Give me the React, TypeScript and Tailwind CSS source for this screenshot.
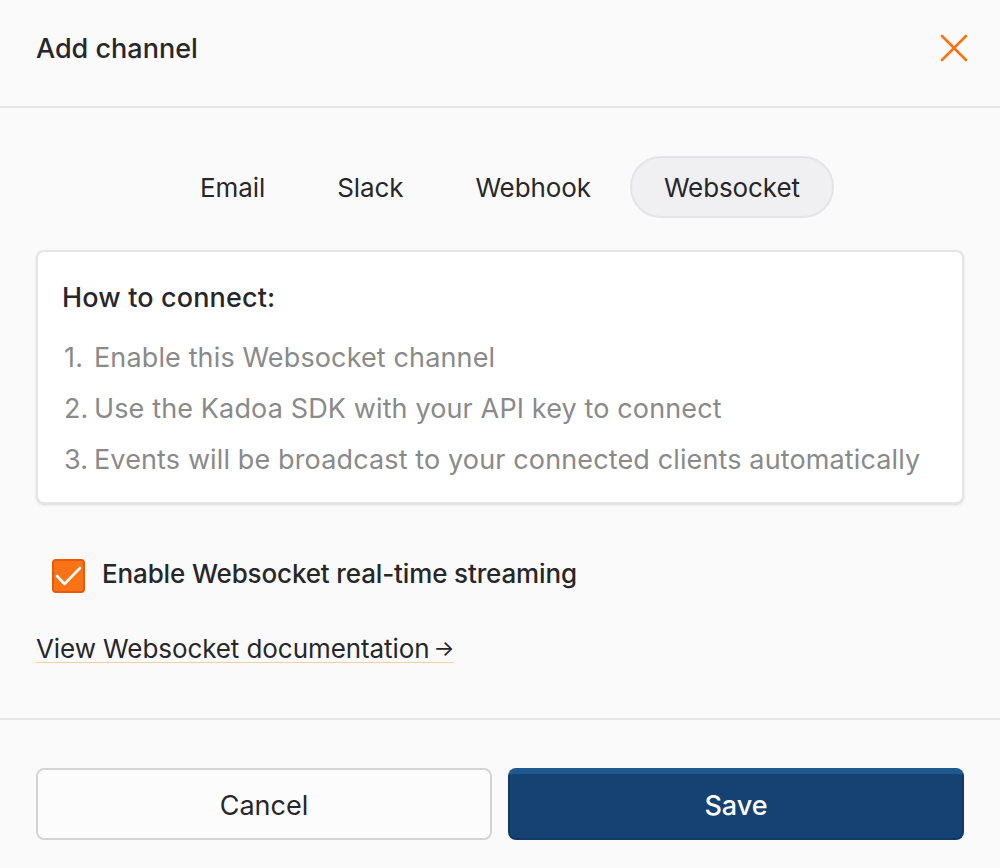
const tabs = ["Email", "Slack", "Webhook", "Websocket"];

const steps = [
  "Enable this Websocket channel",
  "Use the Kadoa SDK with your API key to connect",
  "Events will be broadcast to your connected clients automatically",
];

export default function App() {
  return (
    <div className="flex h-[868px] w-[1000px] flex-col bg-[#fafafa] font-['Inter',sans-serif] text-[#27272a]">
      <div className="flex h-[108px] shrink-0 items-center justify-between border-b-2 border-[#e5e5e5] pl-9 pr-[32px] pb-[10px]">
        <h2 className="pt-[2px] text-[27px] font-medium leading-8">Add channel</h2>
        <svg width="28" height="28" viewBox="0 0 28 28" fill="none" stroke="#f97316" strokeWidth="2.6" strokeLinecap="round">
          <path d="M2 2 L26 26 M26 2 L2 26" />
        </svg>
      </div>

      <div className="flex flex-1 flex-col px-9 pt-12">
        <div className="flex justify-center gap-[4px]">
          {tabs.map((tab) => (
            <div
              key={tab}
              className={`flex h-[62px] items-center rounded-full border-2 px-[32px] text-[26px] tracking-[-0.1px] ${
                tab === "Websocket" ? "ml-[1px] border-[#e4e4e7] bg-[#f0f0f3]" : "border-transparent"
              }`}
            >
              {tab}
            </div>
          ))}
        </div>

        <div className="mt-8 h-[254px] rounded-lg border-2 border-[#e5e5e5] bg-white px-6 pt-[28px] shadow-sm">
          <p className="text-[27px] font-medium leading-9 tracking-[0.15px]">How to connect:</p>
          <ol className="mt-[16px] text-[27px] leading-[51px] tracking-[0.13px] text-[#8a8a8a]">
            {steps.map((step, i) => (
              <li key={step} className="flex pl-[2px]">
                <span className="w-[30px] shrink-0">{i + 1}.</span>
                <span>{step}</span>
              </li>
            ))}
          </ol>
        </div>

        <div className="mt-[55px] flex h-[34px] items-center gap-[17px] pl-4">
          <div className="flex h-[34px] w-[33px] items-center justify-center rounded-[4px] border-2 border-[#ea580c] bg-[#f97316]">
            <svg width="27" height="20" viewBox="0 0 27 20" fill="none" stroke="#ffffff" strokeWidth="2.6" strokeLinecap="round" strokeLinejoin="round">
              <path d="M2 10 L9.5 18 L25 2" />
            </svg>
          </div>
          <span className="pb-[6px] text-[26px] font-medium tracking-[-0.14px]">Enable Websocket real-time streaming</span>
        </div>

        <a className="mt-[42px] flex w-fit items-center gap-[4px] border-b border-[#fbd0a8] text-[26px] leading-[27px] tracking-[-0.08px]">
          View Websocket documentation
          <span className="text-[22px]">→</span>
        </a>
      </div>

      <div className="flex h-[150px] shrink-0 gap-4 border-t-2 border-[#e5e5e5] px-9 pt-[48px]">
        <button className="h-[72px] flex-1 rounded-lg border-2 border-[#d4d4d4] bg-[#fcfcfc] pt-[4px] text-[27px]">Cancel</button>
        <button className="h-[72px] flex-1 rounded-lg border-t-[6px] border-r-2 border-b-2 border-l-2 border-t-[#1f5a8f] border-r-[#103a66] border-b-[#103a66] border-l-[#103a66] bg-[#154273] text-[27px] font-medium text-white">Save</button>
      </div>
    </div>
  );
}
